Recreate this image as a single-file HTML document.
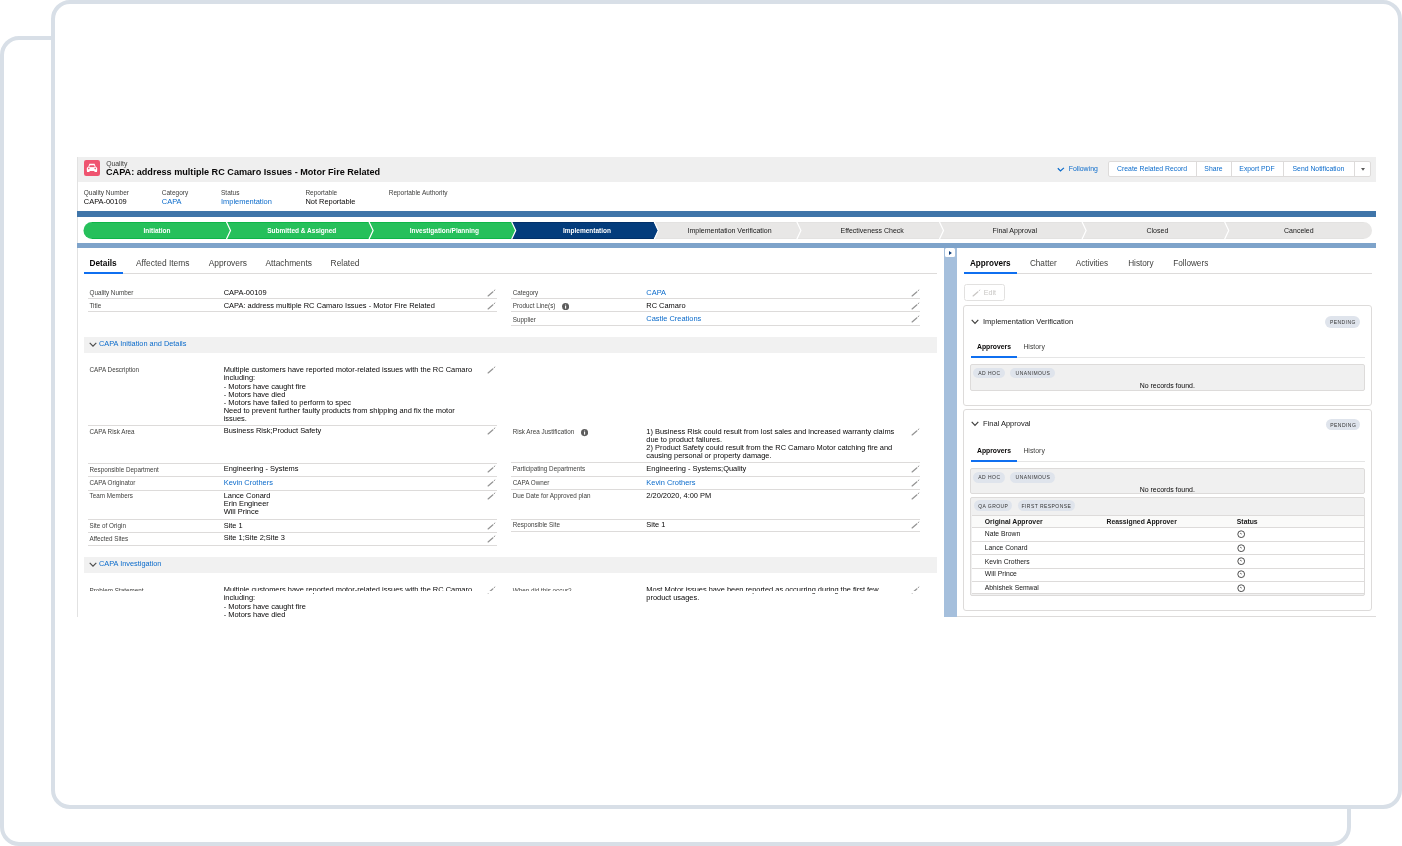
<!DOCTYPE html>
<html><head><meta charset="utf-8"><style>
html,body{margin:0;padding:0;width:1402px;height:846px;overflow:hidden;background:#fff;}
body{position:relative;font-family:"Liberation Sans",sans-serif;}
#w{position:absolute;left:0;top:0;width:1402px;height:846px;will-change:transform;}
#w>div,#w>svg{position:absolute;}
.t{white-space:nowrap;}
</style></head><body>
<div id="w"><div style="left:0;top:36px;width:1351px;height:810px;box-sizing:border-box;border:4px solid #d8dfe7;border-radius:19px;background:#fff"></div>
<div style="left:51px;top:0;width:1351px;height:809px;box-sizing:border-box;border:4px solid #d8dfe7;border-radius:19px;background:#fff"></div>
<div style="left:77.00px;top:157.00px;width:1299.00px;height:25.00px;background:#efefef;"></div>
<div style="left:77.00px;top:157.00px;width:1.00px;height:460.00px;background:#e2e2e2;"></div>
<svg style="left:83.6px;top:160.2px" width="16" height="16" viewBox="0 0 16 16">
<rect width="16" height="16" rx="2.2" fill="#ef5470"/>
<path d="M5.4 3.8 H10.6 L11.9 7.4 H4.1 Z" fill="#fff"/>
<path d="M5.9 5.3 H10.1 L10.9 7.2 H5.1 Z" fill="#ef5470"/>
<path d="M3.2 7.3 H12.8 Q13.3 7.6 13.2 9.5 L13 12 H10.6 L10.3 10.9 H5.7 L5.4 12 H3 L2.8 9.5 Q2.7 7.6 3.2 7.3 Z" fill="#fff"/>
<circle cx="4.8" cy="8.6" r="0.8" fill="#ef5470"/><circle cx="11.2" cy="8.6" r="0.8" fill="#ef5470"/>
</svg>
<div class="t" style="top:161.04px;font-size:6.8px;line-height:6.8px;color:#3e3e3c;left:106.20px;">Quality</div>
<div class="t" style="top:167.88px;font-size:9.12px;line-height:9.12px;color:#080707;font-weight:700;left:106.00px;">CAPA: address multiple RC Camaro Issues - Motor Fire Related</div>
<svg style="left:1056.6px;top:167px" width="8" height="5" viewBox="0 0 8 5"><path d="M0.8 1.3 L3.5 3.9 L6.9 0.9" stroke="#0b6bcb" stroke-width="1.25" fill="none"/></svg>
<div class="t" style="top:165.76px;font-size:6.9px;line-height:6.9px;color:#0b6bcb;left:1068.70px;">Following</div>
<div style="left:1108px;top:161.2px;width:262.5px;height:15.6px;box-sizing:border-box;border:1px solid #dddbda;border-radius:2px;background:#fff"></div>
<div style="left:1196.00px;top:162.00px;width:1.00px;height:14.20px;background:#dddbda;"></div>
<div style="left:1231.00px;top:162.00px;width:1.00px;height:14.20px;background:#dddbda;"></div>
<div style="left:1283.00px;top:162.00px;width:1.00px;height:14.20px;background:#dddbda;"></div>
<div style="left:1353.80px;top:162.00px;width:1.00px;height:14.20px;background:#dddbda;"></div>
<div class="t" style="top:166.10px;font-size:6.85px;line-height:6.85px;color:#0b6bcb;left:852.10px;width:600px;text-align:center;">Create Related Record</div>
<div class="t" style="top:166.10px;font-size:6.85px;line-height:6.85px;color:#0b6bcb;left:913.50px;width:600px;text-align:center;">Share</div>
<div class="t" style="top:166.10px;font-size:6.85px;line-height:6.85px;color:#0b6bcb;left:957.00px;width:600px;text-align:center;">Export PDF</div>
<div class="t" style="top:166.10px;font-size:6.85px;line-height:6.85px;color:#0b6bcb;left:1018.40px;width:600px;text-align:center;">Send Notification</div>
<svg style="left:1360.8px;top:168px" width="4" height="3" viewBox="0 0 4 3"><path d="M0 0 H4 L2 2.8 Z" fill="#5a5a5a"/></svg>
<div class="t" style="top:190.00px;font-size:6.5px;line-height:6.5px;color:#3e3e3c;left:83.80px;">Quality Number</div>
<div class="t" style="top:190.00px;font-size:6.5px;line-height:6.5px;color:#3e3e3c;left:161.80px;">Category</div>
<div class="t" style="top:190.00px;font-size:6.5px;line-height:6.5px;color:#3e3e3c;left:221.00px;">Status</div>
<div class="t" style="top:190.00px;font-size:6.5px;line-height:6.5px;color:#3e3e3c;left:305.40px;">Reportable</div>
<div class="t" style="top:190.00px;font-size:6.5px;line-height:6.5px;color:#3e3e3c;left:388.70px;">Reportable Authority</div>
<div class="t" style="top:197.69px;font-size:7.45px;line-height:7.45px;color:#080707;left:83.80px;">CAPA-00109</div>
<div class="t" style="top:197.69px;font-size:7.45px;line-height:7.45px;color:#0b6bcb;left:161.80px;">CAPA</div>
<div class="t" style="top:197.69px;font-size:7.45px;line-height:7.45px;color:#0b6bcb;left:221.00px;">Implementation</div>
<div class="t" style="top:197.69px;font-size:7.45px;line-height:7.45px;color:#080707;left:305.40px;">Not Reportable</div>
<div style="left:77.00px;top:211.30px;width:1299.00px;height:6.00px;background:#3f75a9;"></div>
<div style="left:77.00px;top:243.00px;width:1299.00px;height:5.00px;background:#7ea3ca;"></div>
<svg style="left:0;top:0" width="1402" height="846" viewBox="0 0 1402 846"><path d="M92.00 222 H226.30 L230.50 230.50 L226.30 239 H92.00 A8.5 8.5 0 0 1 92.00 222 Z" fill="#26c05b"/><rect x="92.00" y="222" width="134.30" height="0.9" fill="#0bb447"/><rect x="92.00" y="238.1" width="134.30" height="0.9" fill="#0bb447"/><path d="M226.30 222 H368.90 L373.10 230.50 L368.90 239 H226.30 L230.50 230.50 Z" fill="#26c05b"/><rect x="226.30" y="222" width="142.60" height="0.9" fill="#0bb447"/><rect x="226.30" y="238.1" width="142.60" height="0.9" fill="#0bb447"/><path d="M368.90 222 H511.50 L515.70 230.50 L511.50 239 H368.90 L373.10 230.50 Z" fill="#26c05b"/><rect x="368.90" y="222" width="142.60" height="0.9" fill="#0bb447"/><rect x="368.90" y="238.1" width="142.60" height="0.9" fill="#0bb447"/><path d="M511.50 222 H654.10 L658.30 230.50 L654.10 239 H511.50 L515.70 230.50 Z" fill="#033c7c"/><rect x="511.50" y="222" width="142.60" height="0.9" fill="#022f66"/><rect x="511.50" y="238.1" width="142.60" height="0.9" fill="#022f66"/><path d="M654.10 222 H796.70 L800.90 230.50 L796.70 239 H654.10 L658.30 230.50 Z" fill="#e8e7e6"/><rect x="654.10" y="222" width="142.60" height="0.9" fill="#e2e1e0"/><rect x="654.10" y="238.1" width="142.60" height="0.9" fill="#e2e1e0"/><path d="M796.70 222 H939.30 L943.50 230.50 L939.30 239 H796.70 L800.90 230.50 Z" fill="#e8e7e6"/><rect x="796.70" y="222" width="142.60" height="0.9" fill="#e2e1e0"/><rect x="796.70" y="238.1" width="142.60" height="0.9" fill="#e2e1e0"/><path d="M939.30 222 H1081.90 L1086.10 230.50 L1081.90 239 H939.30 L943.50 230.50 Z" fill="#e8e7e6"/><rect x="939.30" y="222" width="142.60" height="0.9" fill="#e2e1e0"/><rect x="939.30" y="238.1" width="142.60" height="0.9" fill="#e2e1e0"/><path d="M1081.90 222 H1224.50 L1228.70 230.50 L1224.50 239 H1081.90 L1086.10 230.50 Z" fill="#e8e7e6"/><rect x="1081.90" y="222" width="142.60" height="0.9" fill="#e2e1e0"/><rect x="1081.90" y="238.1" width="142.60" height="0.9" fill="#e2e1e0"/><path d="M1224.50 222 H1363.50 A8.5 8.5 0 0 1 1363.50 239 H1224.50 L1228.70 230.50 Z" fill="#e8e7e6"/><rect x="1224.50" y="222" width="139.00" height="0.9" fill="#e2e1e0"/><rect x="1224.50" y="238.1" width="139.00" height="0.9" fill="#e2e1e0"/><path d="M226.30 221.5 L230.50 230.50 L226.30 239.5" stroke="#fff" stroke-width="1.2" fill="none"/><path d="M368.90 221.5 L373.10 230.50 L368.90 239.5" stroke="#fff" stroke-width="1.2" fill="none"/><path d="M511.50 221.5 L515.70 230.50 L511.50 239.5" stroke="#fff" stroke-width="1.2" fill="none"/><path d="M654.10 221.5 L658.30 230.50 L654.10 239.5" stroke="#fff" stroke-width="1.2" fill="none"/><path d="M796.70 221.5 L800.90 230.50 L796.70 239.5" stroke="#fff" stroke-width="1.2" fill="none"/><path d="M939.30 221.5 L943.50 230.50 L939.30 239.5" stroke="#fff" stroke-width="1.2" fill="none"/><path d="M1081.90 221.5 L1086.10 230.50 L1081.90 239.5" stroke="#fff" stroke-width="1.2" fill="none"/><path d="M1224.50 221.5 L1228.70 230.50 L1224.50 239.5" stroke="#fff" stroke-width="1.2" fill="none"/></svg>
<div class="t" style="top:227.90px;font-size:6.5px;line-height:6.5px;color:#fff;font-weight:700;left:-143.00px;width:600px;text-align:center;">Initiation</div>
<div class="t" style="top:227.90px;font-size:6.5px;line-height:6.5px;color:#fff;font-weight:700;left:1.80px;width:600px;text-align:center;">Submitted &amp; Assigned</div>
<div class="t" style="top:227.90px;font-size:6.5px;line-height:6.5px;color:#fff;font-weight:700;left:144.40px;width:600px;text-align:center;">Investigation/Planning</div>
<div class="t" style="top:227.90px;font-size:6.5px;line-height:6.5px;color:#fff;font-weight:700;left:287.00px;width:600px;text-align:center;">Implementation</div>
<div class="t" style="top:227.47px;font-size:7.0px;line-height:7.0px;color:#181818;left:429.60px;width:600px;text-align:center;">Implementation Verification</div>
<div class="t" style="top:227.47px;font-size:7.0px;line-height:7.0px;color:#181818;left:572.20px;width:600px;text-align:center;">Effectiveness Check</div>
<div class="t" style="top:227.47px;font-size:7.0px;line-height:7.0px;color:#181818;left:714.80px;width:600px;text-align:center;">Final Approval</div>
<div class="t" style="top:227.47px;font-size:7.0px;line-height:7.0px;color:#181818;left:857.40px;width:600px;text-align:center;">Closed</div>
<div class="t" style="top:227.47px;font-size:7.0px;line-height:7.0px;color:#181818;left:998.85px;width:600px;text-align:center;">Canceled</div>
<div class="t" style="top:259.17px;font-size:8.3px;line-height:8.3px;color:#080707;font-weight:700;left:89.50px;">Details</div>
<div class="t" style="top:259.09px;font-size:8.4px;line-height:8.4px;color:#3e3e3c;left:136.00px;">Affected Items</div>
<div class="t" style="top:259.09px;font-size:8.4px;line-height:8.4px;color:#3e3e3c;left:208.70px;">Approvers</div>
<div class="t" style="top:259.09px;font-size:8.4px;line-height:8.4px;color:#3e3e3c;left:265.40px;">Attachments</div>
<div class="t" style="top:259.09px;font-size:8.4px;line-height:8.4px;color:#3e3e3c;left:330.60px;">Related</div>
<div style="left:83.50px;top:273.00px;width:853.50px;height:1.00px;background:#dddbda;"></div>
<div style="left:83.50px;top:271.60px;width:39.50px;height:2.00px;background:#0f6ff0;"></div>
<div class="t" style="top:290.07px;font-size:6.3px;line-height:6.3px;color:#3e3e3c;left:89.50px;">Quality Number</div>
<div class="t" style="top:288.72px;font-size:7.45px;line-height:8.2px;color:#080707;left:223.70px;white-space:pre;">CAPA-00109</div>
<svg style="left:487px;top:288.8px" width="9" height="8" viewBox="0 0 9 8"><path d="M1.1 6.9 L5.7 2.9" stroke="#959595" stroke-width="1.3" stroke-linecap="round" fill="none"/><path d="M7.0 1.8 L7.9 1.0" stroke="#959595" stroke-width="1.0" stroke-linecap="round" fill="none"/></svg>
<div style="left:88.00px;top:298.40px;width:409.00px;height:1.00px;background:#dddbda;"></div>
<div class="t" style="top:303.07px;font-size:6.3px;line-height:6.3px;color:#3e3e3c;left:89.50px;">Title</div>
<div class="t" style="top:301.72px;font-size:7.45px;line-height:8.2px;color:#080707;left:223.70px;white-space:pre;">CAPA: address multiple RC Camaro Issues - Motor Fire Related</div>
<svg style="left:487px;top:301.8px" width="9" height="8" viewBox="0 0 9 8"><path d="M1.1 6.9 L5.7 2.9" stroke="#959595" stroke-width="1.3" stroke-linecap="round" fill="none"/><path d="M7.0 1.8 L7.9 1.0" stroke="#959595" stroke-width="1.0" stroke-linecap="round" fill="none"/></svg>
<div style="left:88.00px;top:311.30px;width:409.00px;height:1.00px;background:#dddbda;"></div>
<div class="t" style="top:290.07px;font-size:6.3px;line-height:6.3px;color:#3e3e3c;left:512.70px;">Category</div>
<div class="t" style="top:288.72px;font-size:7.45px;line-height:8.2px;color:#0b6bcb;left:646.30px;white-space:pre;">CAPA</div>
<svg style="left:910.5px;top:288.8px" width="9" height="8" viewBox="0 0 9 8"><path d="M1.1 6.9 L5.7 2.9" stroke="#959595" stroke-width="1.3" stroke-linecap="round" fill="none"/><path d="M7.0 1.8 L7.9 1.0" stroke="#959595" stroke-width="1.0" stroke-linecap="round" fill="none"/></svg>
<div style="left:510.50px;top:298.40px;width:409.50px;height:1.00px;background:#dddbda;"></div>
<div class="t" style="top:303.07px;font-size:6.3px;line-height:6.3px;color:#3e3e3c;left:512.70px;">Product Line(s)</div>
<div class="t" style="top:301.72px;font-size:7.45px;line-height:8.2px;color:#080707;left:646.30px;white-space:pre;">RC Camaro</div>
<svg style="left:910.5px;top:301.8px" width="9" height="8" viewBox="0 0 9 8"><path d="M1.1 6.9 L5.7 2.9" stroke="#959595" stroke-width="1.3" stroke-linecap="round" fill="none"/><path d="M7.0 1.8 L7.9 1.0" stroke="#959595" stroke-width="1.0" stroke-linecap="round" fill="none"/></svg>
<div style="left:510.50px;top:311.30px;width:409.50px;height:1.00px;background:#dddbda;"></div>
<svg style="left:561.6px;top:302.79999999999995px" width="7.2" height="7.2" viewBox="0 0 8 8"><circle cx="4" cy="4" r="4" fill="#5c5c5c"/><rect x="3.4" y="3.3" width="1.2" height="3" fill="#fff"/><circle cx="4" cy="2.2" r="0.65" fill="#fff"/></svg>
<div class="t" style="top:316.57px;font-size:6.3px;line-height:6.3px;color:#3e3e3c;left:512.70px;">Supplier</div>
<div class="t" style="top:315.22px;font-size:7.45px;line-height:8.2px;color:#0b6bcb;left:646.30px;white-space:pre;">Castle Creations</div>
<svg style="left:910.5px;top:315.3px" width="9" height="8" viewBox="0 0 9 8"><path d="M1.1 6.9 L5.7 2.9" stroke="#959595" stroke-width="1.3" stroke-linecap="round" fill="none"/><path d="M7.0 1.8 L7.9 1.0" stroke="#959595" stroke-width="1.0" stroke-linecap="round" fill="none"/></svg>
<div style="left:510.50px;top:324.50px;width:409.50px;height:1.00px;background:#dddbda;"></div>
<div style="left:83.80px;top:336.90px;width:853.00px;height:16.10px;background:#f1f1f1;"></div>
<svg style="left:88.5px;top:341.90000000000003px" width="8" height="5.5" viewBox="0 0 8 5.5"><path d="M0.7 0.8 L4 4.2 L7.3 0.8" stroke="#4a4a4a" stroke-width="1.1" fill="none"/></svg>
<div class="t" style="top:339.86px;font-size:7.37px;line-height:7.37px;color:#0b6bcb;left:99.00px;">CAPA Initiation and Details</div>
<div class="t" style="top:367.47px;font-size:6.3px;line-height:6.3px;color:#3e3e3c;left:89.50px;">CAPA Description</div>
<div class="t" style="top:366.12px;font-size:7.45px;line-height:8.2px;color:#080707;left:223.70px;white-space:pre;">Multiple customers have reported motor-related issues with the RC Camaro
including:
- Motors have caught fire
- Motors have died
- Motors have failed to perform to spec
Need to prevent further faulty products from shipping and fix the motor
issues.</div>
<svg style="left:487px;top:366.2px" width="9" height="8" viewBox="0 0 9 8"><path d="M1.1 6.9 L5.7 2.9" stroke="#959595" stroke-width="1.3" stroke-linecap="round" fill="none"/><path d="M7.0 1.8 L7.9 1.0" stroke="#959595" stroke-width="1.0" stroke-linecap="round" fill="none"/></svg>
<div style="left:88.00px;top:425.00px;width:409.00px;height:1.00px;background:#dddbda;"></div>
<div class="t" style="top:428.67px;font-size:6.3px;line-height:6.3px;color:#3e3e3c;left:89.50px;">CAPA Risk Area</div>
<div class="t" style="top:427.32px;font-size:7.45px;line-height:8.2px;color:#080707;left:223.70px;white-space:pre;">Business Risk;Product Safety</div>
<svg style="left:487px;top:427.40000000000003px" width="9" height="8" viewBox="0 0 9 8"><path d="M1.1 6.9 L5.7 2.9" stroke="#959595" stroke-width="1.3" stroke-linecap="round" fill="none"/><path d="M7.0 1.8 L7.9 1.0" stroke="#959595" stroke-width="1.0" stroke-linecap="round" fill="none"/></svg>
<div style="left:88.00px;top:462.80px;width:409.00px;height:1.00px;background:#dddbda;"></div>
<div class="t" style="top:466.67px;font-size:6.3px;line-height:6.3px;color:#3e3e3c;left:89.50px;">Responsible Department</div>
<div class="t" style="top:465.32px;font-size:7.45px;line-height:8.2px;color:#080707;left:223.70px;white-space:pre;">Engineering - Systems</div>
<svg style="left:487px;top:465.40000000000003px" width="9" height="8" viewBox="0 0 9 8"><path d="M1.1 6.9 L5.7 2.9" stroke="#959595" stroke-width="1.3" stroke-linecap="round" fill="none"/><path d="M7.0 1.8 L7.9 1.0" stroke="#959595" stroke-width="1.0" stroke-linecap="round" fill="none"/></svg>
<div style="left:88.00px;top:476.00px;width:409.00px;height:1.00px;background:#dddbda;"></div>
<div class="t" style="top:480.47px;font-size:6.3px;line-height:6.3px;color:#3e3e3c;left:89.50px;">CAPA Originator</div>
<div class="t" style="top:479.12px;font-size:7.45px;line-height:8.2px;color:#0b6bcb;left:223.70px;white-space:pre;">Kevin Crothers</div>
<svg style="left:487px;top:479.2px" width="9" height="8" viewBox="0 0 9 8"><path d="M1.1 6.9 L5.7 2.9" stroke="#959595" stroke-width="1.3" stroke-linecap="round" fill="none"/><path d="M7.0 1.8 L7.9 1.0" stroke="#959595" stroke-width="1.0" stroke-linecap="round" fill="none"/></svg>
<div style="left:88.00px;top:489.50px;width:409.00px;height:1.00px;background:#dddbda;"></div>
<div class="t" style="top:493.37px;font-size:6.3px;line-height:6.3px;color:#3e3e3c;left:89.50px;">Team Members</div>
<div class="t" style="top:492.02px;font-size:7.45px;line-height:8.2px;color:#080707;left:223.70px;white-space:pre;">Lance Conard
Erin Engineer
Will Prince</div>
<svg style="left:487px;top:492.1px" width="9" height="8" viewBox="0 0 9 8"><path d="M1.1 6.9 L5.7 2.9" stroke="#959595" stroke-width="1.3" stroke-linecap="round" fill="none"/><path d="M7.0 1.8 L7.9 1.0" stroke="#959595" stroke-width="1.0" stroke-linecap="round" fill="none"/></svg>
<div style="left:88.00px;top:518.70px;width:409.00px;height:1.00px;background:#dddbda;"></div>
<div class="t" style="top:523.07px;font-size:6.3px;line-height:6.3px;color:#3e3e3c;left:89.50px;">Site of Origin</div>
<div class="t" style="top:521.72px;font-size:7.45px;line-height:8.2px;color:#080707;left:223.70px;white-space:pre;">Site 1</div>
<svg style="left:487px;top:521.8px" width="9" height="8" viewBox="0 0 9 8"><path d="M1.1 6.9 L5.7 2.9" stroke="#959595" stroke-width="1.3" stroke-linecap="round" fill="none"/><path d="M7.0 1.8 L7.9 1.0" stroke="#959595" stroke-width="1.0" stroke-linecap="round" fill="none"/></svg>
<div style="left:88.00px;top:532.00px;width:409.00px;height:1.00px;background:#dddbda;"></div>
<div class="t" style="top:535.77px;font-size:6.3px;line-height:6.3px;color:#3e3e3c;left:89.50px;">Affected Sites</div>
<div class="t" style="top:534.42px;font-size:7.45px;line-height:8.2px;color:#080707;left:223.70px;white-space:pre;">Site 1;Site 2;Site 3</div>
<svg style="left:487px;top:534.5px" width="9" height="8" viewBox="0 0 9 8"><path d="M1.1 6.9 L5.7 2.9" stroke="#959595" stroke-width="1.3" stroke-linecap="round" fill="none"/><path d="M7.0 1.8 L7.9 1.0" stroke="#959595" stroke-width="1.0" stroke-linecap="round" fill="none"/></svg>
<div style="left:88.00px;top:545.00px;width:409.00px;height:1.00px;background:#dddbda;"></div>
<div class="t" style="top:429.07px;font-size:6.3px;line-height:6.3px;color:#3e3e3c;left:512.70px;">Risk Area Justification</div>
<div class="t" style="top:427.72px;font-size:7.45px;line-height:8.2px;color:#080707;left:646.30px;white-space:pre;">1) Business Risk could result from lost sales and increased warranty claims
due to product failures.
2) Product Safety could result from the RC Camaro Motor catching fire and
causing personal or property damage.</div>
<svg style="left:910.5px;top:427.8px" width="9" height="8" viewBox="0 0 9 8"><path d="M1.1 6.9 L5.7 2.9" stroke="#959595" stroke-width="1.3" stroke-linecap="round" fill="none"/><path d="M7.0 1.8 L7.9 1.0" stroke="#959595" stroke-width="1.0" stroke-linecap="round" fill="none"/></svg>
<div style="left:510.50px;top:462.40px;width:409.50px;height:1.00px;background:#dddbda;"></div>
<svg style="left:580.9px;top:429.4px" width="7.2" height="7.2" viewBox="0 0 8 8"><circle cx="4" cy="4" r="4" fill="#5c5c5c"/><rect x="3.4" y="3.3" width="1.2" height="3" fill="#fff"/><circle cx="4" cy="2.2" r="0.65" fill="#fff"/></svg>
<div class="t" style="top:466.07px;font-size:6.3px;line-height:6.3px;color:#3e3e3c;left:512.70px;">Participating Departments</div>
<div class="t" style="top:464.72px;font-size:7.45px;line-height:8.2px;color:#080707;left:646.30px;white-space:pre;">Engineering - Systems;Quality</div>
<svg style="left:910.5px;top:464.8px" width="9" height="8" viewBox="0 0 9 8"><path d="M1.1 6.9 L5.7 2.9" stroke="#959595" stroke-width="1.3" stroke-linecap="round" fill="none"/><path d="M7.0 1.8 L7.9 1.0" stroke="#959595" stroke-width="1.0" stroke-linecap="round" fill="none"/></svg>
<div style="left:510.50px;top:475.60px;width:409.50px;height:1.00px;background:#dddbda;"></div>
<div class="t" style="top:480.07px;font-size:6.3px;line-height:6.3px;color:#3e3e3c;left:512.70px;">CAPA Owner</div>
<div class="t" style="top:478.72px;font-size:7.45px;line-height:8.2px;color:#0b6bcb;left:646.30px;white-space:pre;">Kevin Crothers</div>
<svg style="left:910.5px;top:478.8px" width="9" height="8" viewBox="0 0 9 8"><path d="M1.1 6.9 L5.7 2.9" stroke="#959595" stroke-width="1.3" stroke-linecap="round" fill="none"/><path d="M7.0 1.8 L7.9 1.0" stroke="#959595" stroke-width="1.0" stroke-linecap="round" fill="none"/></svg>
<div style="left:510.50px;top:489.00px;width:409.50px;height:1.00px;background:#dddbda;"></div>
<div class="t" style="top:492.87px;font-size:6.3px;line-height:6.3px;color:#3e3e3c;left:512.70px;">Due Date for Approved plan</div>
<div class="t" style="top:491.52px;font-size:7.45px;line-height:8.2px;color:#080707;left:646.30px;white-space:pre;">2/20/2020, 4:00 PM</div>
<svg style="left:910.5px;top:491.6px" width="9" height="8" viewBox="0 0 9 8"><path d="M1.1 6.9 L5.7 2.9" stroke="#959595" stroke-width="1.3" stroke-linecap="round" fill="none"/><path d="M7.0 1.8 L7.9 1.0" stroke="#959595" stroke-width="1.0" stroke-linecap="round" fill="none"/></svg>
<div style="left:510.50px;top:518.90px;width:409.50px;height:1.00px;background:#dddbda;"></div>
<div class="t" style="top:522.37px;font-size:6.3px;line-height:6.3px;color:#3e3e3c;left:512.70px;">Responsible Site</div>
<div class="t" style="top:521.02px;font-size:7.45px;line-height:8.2px;color:#080707;left:646.30px;white-space:pre;">Site 1</div>
<svg style="left:910.5px;top:521.0999999999999px" width="9" height="8" viewBox="0 0 9 8"><path d="M1.1 6.9 L5.7 2.9" stroke="#959595" stroke-width="1.3" stroke-linecap="round" fill="none"/><path d="M7.0 1.8 L7.9 1.0" stroke="#959595" stroke-width="1.0" stroke-linecap="round" fill="none"/></svg>
<div style="left:510.50px;top:531.40px;width:409.50px;height:1.00px;background:#dddbda;"></div>
<div style="left:83.80px;top:556.60px;width:853.00px;height:16.10px;background:#f1f1f1;"></div>
<svg style="left:88.5px;top:561.6px" width="8" height="5.5" viewBox="0 0 8 5.5"><path d="M0.7 0.8 L4 4.2 L7.3 0.8" stroke="#4a4a4a" stroke-width="1.1" fill="none"/></svg>
<div class="t" style="top:559.56px;font-size:7.37px;line-height:7.37px;color:#0b6bcb;left:99.00px;">CAPA Investigation</div>
<div class="t" style="top:587.57px;font-size:6.3px;line-height:6.3px;color:#3e3e3c;left:89.50px;">Problem Statement</div>
<div class="t" style="top:586.22px;font-size:7.45px;line-height:8.2px;color:#080707;left:223.70px;white-space:pre;">Multiple customers have reported motor-related issues with the RC Camaro
including:
- Motors have caught fire
- Motors have died
- Motors have failed to perform to spec</div>
<svg style="left:487px;top:586.3px" width="9" height="8" viewBox="0 0 9 8"><path d="M1.1 6.9 L5.7 2.9" stroke="#959595" stroke-width="1.3" stroke-linecap="round" fill="none"/><path d="M7.0 1.8 L7.9 1.0" stroke="#959595" stroke-width="1.0" stroke-linecap="round" fill="none"/></svg>
<div class="t" style="top:587.57px;font-size:6.3px;line-height:6.3px;color:#3e3e3c;left:512.70px;">When did this occur?</div>
<div class="t" style="top:586.22px;font-size:7.45px;line-height:8.2px;color:#080707;left:646.30px;white-space:pre;">Most Motor issues have been reported as occurring during the first few
product usages.</div>
<svg style="left:910.5px;top:586.3px" width="9" height="8" viewBox="0 0 9 8"><path d="M1.1 6.9 L5.7 2.9" stroke="#959595" stroke-width="1.3" stroke-linecap="round" fill="none"/><path d="M7.0 1.8 L7.9 1.0" stroke="#959595" stroke-width="1.0" stroke-linecap="round" fill="none"/></svg>
<div style="left:78.00px;top:591.00px;width:866.00px;height:1.70px;background:#fff;"></div>
<div style="left:78.00px;top:617.50px;width:866.00px;height:40.00px;background:#fff;"></div>
<div style="left:944.30px;top:247.80px;width:12.70px;height:369.00px;background:#a5bfdc;"></div>
<div style="left:945px;top:248.3px;width:10px;height:9.2px;background:#fff;border-radius:1.5px"></div>
<svg style="left:948.8px;top:251.4px" width="3" height="4" viewBox="0 0 3 4"><path d="M0 0 L2.9 2 L0 4 Z" fill="#0b3a78"/></svg>
<div class="t" style="top:259.82px;font-size:8.13px;line-height:8.13px;color:#080707;font-weight:700;left:970.00px;">Approvers</div>
<div class="t" style="top:259.76px;font-size:8.2px;line-height:8.2px;color:#3e3e3c;left:1029.90px;">Chatter</div>
<div class="t" style="top:259.76px;font-size:8.2px;line-height:8.2px;color:#3e3e3c;left:1075.80px;">Activities</div>
<div class="t" style="top:259.76px;font-size:8.2px;line-height:8.2px;color:#3e3e3c;left:1128.20px;">History</div>
<div class="t" style="top:259.76px;font-size:8.2px;line-height:8.2px;color:#3e3e3c;left:1173.20px;">Followers</div>
<div style="left:963.80px;top:273.00px;width:408.00px;height:1.00px;background:#dddbda;"></div>
<div style="left:963.80px;top:271.60px;width:53.20px;height:2.00px;background:#0f6ff0;"></div>
<div style="left:963.6px;top:283.8px;width:41.2px;height:17px;box-sizing:border-box;border:1px solid #e2e1e0;border-radius:2.5px;background:#fff"></div>
<svg style="left:972px;top:288.8px" width="9" height="8" viewBox="0 0 9 8"><path d="M1.1 6.9 L5.7 2.9" stroke="#c9c7c5" stroke-width="1.3" stroke-linecap="round" fill="none"/><path d="M7.0 1.8 L7.9 1.0" stroke="#c9c7c5" stroke-width="1.0" stroke-linecap="round" fill="none"/></svg>
<div class="t" style="top:289.11px;font-size:7.2px;line-height:7.2px;color:#c9c7c5;left:983.70px;">Edit</div>
<div style="left:963px;top:305.2px;width:408.5px;height:101.00px;box-sizing:border-box;border:1px solid #dddbda;border-radius:3px;background:#fff"></div>
<svg style="left:970.6px;top:319.3px" width="8" height="5.5" viewBox="0 0 8 5.5"><path d="M0.7 0.8 L4 4.3 L7.3 0.8" stroke="#3e3e3c" stroke-width="1.15" fill="none"/></svg>
<div class="t" style="top:317.95px;font-size:7.5px;line-height:7.5px;color:#181818;left:983.00px;">Implementation Verification</div>
<div style="left:1325.3px;top:316px;width:34.70px;height:11.70px;background:#dfe4ec;border-radius:6px"></div>
<div class="t" style="top:319.82px;font-size:5.0px;line-height:5.0px;color:#333333;letter-spacing:0.45px;left:1042.88px;width:600px;text-align:center;">PENDING</div>
<div class="t" style="top:343.64px;font-size:6.8px;line-height:6.8px;color:#080707;font-weight:700;left:977.00px;">Approvers</div>
<div class="t" style="top:343.56px;font-size:6.9px;line-height:6.9px;color:#3e3e3c;left:1023.40px;">History</div>
<div style="left:970.50px;top:357.20px;width:394.20px;height:1.00px;background:#e5e5e5;"></div>
<div style="left:970.50px;top:355.80px;width:46.50px;height:1.80px;background:#0f6ff0;"></div>
<div style="left:970.1px;top:364.3px;width:394.6px;height:26.6px;box-sizing:border-box;border:1px solid #dddbda;border-radius:2px;background:#f0f0f0"></div>
<div style="left:973.3px;top:367.5px;width:31.70px;height:10.90px;background:#dfe4ec;border-radius:6px"></div>
<div class="t" style="top:370.92px;font-size:5.0px;line-height:5.0px;color:#333333;letter-spacing:0.45px;left:689.38px;width:600px;text-align:center;">AD HOC</div>
<div style="left:1010.2px;top:367.5px;width:45.00px;height:10.90px;background:#dfe4ec;border-radius:6px"></div>
<div class="t" style="top:370.92px;font-size:5.0px;line-height:5.0px;color:#333333;letter-spacing:0.45px;left:732.92px;width:600px;text-align:center;">UNANIMOUS</div>
<div class="t" style="top:382.53px;font-size:6.94px;line-height:6.94px;color:#080707;left:867.30px;width:600px;text-align:center;">No records found.</div>
<div style="left:963px;top:408.9px;width:408.5px;height:202.30px;box-sizing:border-box;border:1px solid #dddbda;border-radius:3px;background:#fff"></div>
<svg style="left:970.6px;top:421.4px" width="8" height="5.5" viewBox="0 0 8 5.5"><path d="M0.7 0.8 L4 4.3 L7.3 0.8" stroke="#3e3e3c" stroke-width="1.15" fill="none"/></svg>
<div class="t" style="top:420.05px;font-size:7.5px;line-height:7.5px;color:#181818;left:983.00px;">Final Approval</div>
<div style="left:1325.7px;top:419.4px;width:34.70px;height:10.50px;background:#dfe4ec;border-radius:6px"></div>
<div class="t" style="top:422.62px;font-size:5.0px;line-height:5.0px;color:#333333;letter-spacing:0.45px;left:1043.28px;width:600px;text-align:center;">PENDING</div>
<div class="t" style="top:447.84px;font-size:6.8px;line-height:6.8px;color:#080707;font-weight:700;left:977.00px;">Approvers</div>
<div class="t" style="top:447.76px;font-size:6.9px;line-height:6.9px;color:#3e3e3c;left:1023.40px;">History</div>
<div style="left:970.50px;top:461.20px;width:394.20px;height:1.00px;background:#e5e5e5;"></div>
<div style="left:970.50px;top:459.80px;width:46.50px;height:1.80px;background:#0f6ff0;"></div>
<div style="left:970.1px;top:468.3px;width:394.6px;height:26px;box-sizing:border-box;border:1px solid #dddbda;border-radius:2px;background:#f0f0f0"></div>
<div style="left:973.3px;top:471.5px;width:31.70px;height:11.00px;background:#dfe4ec;border-radius:6px"></div>
<div class="t" style="top:474.97px;font-size:5.0px;line-height:5.0px;color:#333333;letter-spacing:0.45px;left:689.38px;width:600px;text-align:center;">AD HOC</div>
<div style="left:1010.2px;top:471.5px;width:45.00px;height:11.00px;background:#dfe4ec;border-radius:6px"></div>
<div class="t" style="top:474.97px;font-size:5.0px;line-height:5.0px;color:#333333;letter-spacing:0.45px;left:732.92px;width:600px;text-align:center;">UNANIMOUS</div>
<div class="t" style="top:486.53px;font-size:6.94px;line-height:6.94px;color:#080707;left:867.30px;width:600px;text-align:center;">No records found.</div>
<div style="left:970.1px;top:497.3px;width:394.6px;height:98.3px;box-sizing:border-box;border:1px solid #dddbda;border-radius:2px;background:#f0f0f0"></div>
<div style="left:973.7px;top:500.2px;width:38.70px;height:11.10px;background:#dfe4ec;border-radius:6px"></div>
<div class="t" style="top:503.72px;font-size:5.0px;line-height:5.0px;color:#333333;letter-spacing:0.45px;left:693.27px;width:600px;text-align:center;">QA GROUP</div>
<div style="left:1017.8px;top:500.2px;width:56.80px;height:11.10px;background:#dfe4ec;border-radius:6px"></div>
<div class="t" style="top:503.72px;font-size:5.0px;line-height:5.0px;color:#333333;letter-spacing:0.45px;left:746.42px;width:600px;text-align:center;">FIRST RESPONSE</div>
<div style="left:971.50px;top:515.30px;width:392.00px;height:78.50px;background:#fff;"></div>
<div style="left:971.50px;top:515.30px;width:392.00px;height:1.00px;background:#dddbda;"></div>
<div style="left:971.50px;top:516.30px;width:392.00px;height:11.00px;background:#fafaf9;"></div>
<div style="left:971.50px;top:527.40px;width:392.00px;height:1.00px;background:#dddbda;"></div>
<div style="left:971.50px;top:540.60px;width:392.00px;height:1.00px;background:#dddbda;"></div>
<div style="left:971.50px;top:554.20px;width:392.00px;height:1.00px;background:#dddbda;"></div>
<div style="left:971.50px;top:567.50px;width:392.00px;height:1.00px;background:#dddbda;"></div>
<div style="left:971.50px;top:580.80px;width:392.00px;height:1.00px;background:#dddbda;"></div>
<div style="left:971.50px;top:593.20px;width:392.00px;height:1.00px;background:#dddbda;"></div>
<div class="t" style="top:518.61px;font-size:6.84px;line-height:6.84px;color:#181818;font-weight:700;left:984.80px;">Original Approver</div>
<div class="t" style="top:518.61px;font-size:6.84px;line-height:6.84px;color:#181818;font-weight:700;left:1106.50px;">Reassigned Approver</div>
<div class="t" style="top:518.61px;font-size:6.84px;line-height:6.84px;color:#181818;font-weight:700;left:1236.80px;">Status</div>
<div class="t" style="top:531.44px;font-size:6.8px;line-height:6.8px;color:#181818;left:984.80px;">Nate Brown</div>
<svg style="left:1236.8px;top:530.0px" width="8.4" height="8.4" viewBox="0 0 8.4 8.4"><circle cx="4.2" cy="4.2" r="3.4" stroke="#3a3a3a" stroke-width="0.9" fill="none"/><path d="M3.4 2.9 L4.4 4.3" stroke="#3a3a3a" stroke-width="0.9"/></svg>
<div class="t" style="top:544.84px;font-size:6.8px;line-height:6.8px;color:#181818;left:984.80px;">Lance Conard</div>
<svg style="left:1236.8px;top:543.5px" width="8.4" height="8.4" viewBox="0 0 8.4 8.4"><circle cx="4.2" cy="4.2" r="3.4" stroke="#3a3a3a" stroke-width="0.9" fill="none"/><path d="M3.4 2.9 L4.4 4.3" stroke="#3a3a3a" stroke-width="0.9"/></svg>
<div class="t" style="top:558.64px;font-size:6.8px;line-height:6.8px;color:#181818;left:984.80px;">Kevin Crothers</div>
<svg style="left:1236.8px;top:556.6999999999999px" width="8.4" height="8.4" viewBox="0 0 8.4 8.4"><circle cx="4.2" cy="4.2" r="3.4" stroke="#3a3a3a" stroke-width="0.9" fill="none"/><path d="M3.4 2.9 L4.4 4.3" stroke="#3a3a3a" stroke-width="0.9"/></svg>
<div class="t" style="top:571.44px;font-size:6.8px;line-height:6.8px;color:#181818;left:984.80px;">Will Prince</div>
<svg style="left:1236.8px;top:570.3px" width="8.4" height="8.4" viewBox="0 0 8.4 8.4"><circle cx="4.2" cy="4.2" r="3.4" stroke="#3a3a3a" stroke-width="0.9" fill="none"/><path d="M3.4 2.9 L4.4 4.3" stroke="#3a3a3a" stroke-width="0.9"/></svg>
<div class="t" style="top:584.64px;font-size:6.8px;line-height:6.8px;color:#181818;left:984.80px;">Abhishek Semwal</div>
<svg style="left:1236.8px;top:583.8px" width="8.4" height="8.4" viewBox="0 0 8.4 8.4"><circle cx="4.2" cy="4.2" r="3.4" stroke="#3a3a3a" stroke-width="0.9" fill="none"/><path d="M3.4 2.9 L4.4 4.3" stroke="#3a3a3a" stroke-width="0.9"/></svg>
<div style="left:957.00px;top:616.20px;width:419.00px;height:1.00px;background:#dddbda;"></div>
</div></body></html>
